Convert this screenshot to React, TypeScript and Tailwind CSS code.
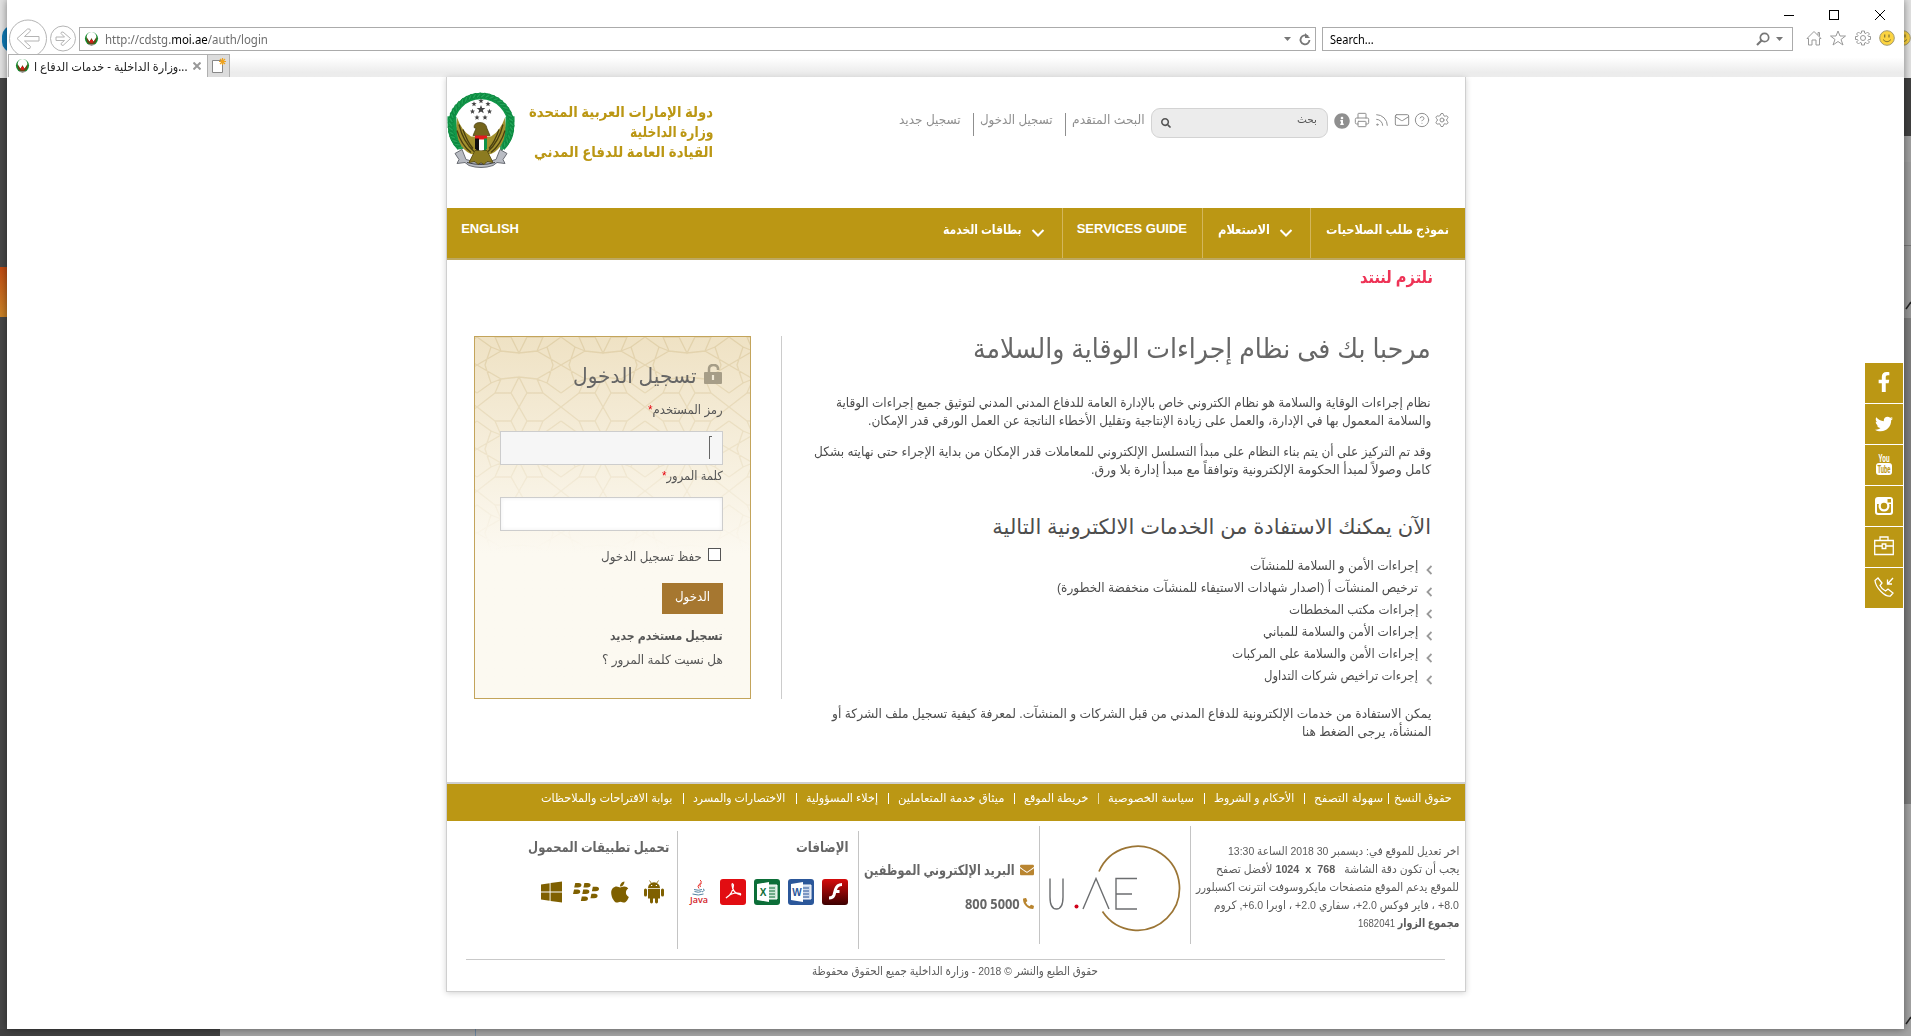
import React, { useLayoutEffect, useRef, useState } from "react";
import {
  FaTwitter, FaFacebookF, FaInfoCircle, FaSearch, FaWindows, FaApple, FaBlackberry, FaEnvelope, FaPhoneAlt,
} from "react-icons/fa";
import { Settings, CircleHelp, Mail, Rss, Printer } from "lucide-react";

/** Single line of text stretched or condensed to the width of its box. */
function Fit({ className = "", ltr = false, children }: { className?: string; ltr?: boolean; children: React.ReactNode }) {
  const box = useRef<HTMLSpanElement>(null);
  const text = useRef<HTMLSpanElement>(null);
  const [scale, setScale] = useState(1);
  useLayoutEffect(() => {
    if (box.current && text.current) setScale(box.current.clientWidth / text.current.offsetWidth);
  }, []);
  return (
    <span ref={box} dir={ltr ? "ltr" : "rtl"} className={"flex shrink-0 items-center justify-start " + className}>
      <span
        ref={text}
        className={"block shrink-0 whitespace-nowrap " + (ltr ? "origin-left" : "origin-right")}
        style={{ transform: `scaleX(${scale})` }}
      >
        {children}
      </span>
    </span>
  );
}

function Favicon() {
  return (
    <svg viewBox="0 0 16 16" className="h-4 w-[15px] shrink-0">
      <ellipse cx="8" cy="7.5" rx="7" ry="7" fill="#128a2c" />
      <ellipse cx="8" cy="5.8" rx="5.2" ry="5.2" fill="#fff" />
      <path d="M2.500 5.500 6 11l2-4 2 4 3.500-5.500-1 6L8 15l-4.500-3.500z" fill="#6d4013" />
      <path d="M6.500 9h3v3h-3z" fill="#e01b1b" />
      <path d="M3.500 13.500h9L8 15.500z" fill="#999" />
    </svg>
  );
}

function Emblem() {
  const leaves = Array.from({ length: 34 }, (_, i) => {
    const deg = 132 + i * 8.35;
    const a = (deg * Math.PI) / 180;
    return [34 + 30.5 * Math.cos(a), 33 + 30 * Math.sin(a), deg] as const;
  });
  const stars = [[34, 8.5, 2.8], [27, 11.5, 2.8], [41, 11.5, 2.8], [25.5, 19, 2.8], [34, 17, 4.6], [42.5, 19, 2.8], [30, 25, 2.8], [38, 25, 2.8]];
  return (
    <svg viewBox="0 0 68 76" className="h-[77px] w-[68px] shrink-0">
      <circle cx="34" cy="33" r="29" fill="#fff" />
      <path d="M13 55A30 30 0 1 1 55 55" fill="none" stroke="#12984a" strokeWidth="6.5" />
      <path d="M5 24Q4 44 14 54M63 24q1 20-9 30" fill="none" stroke="#12984a" strokeWidth="9" />
      {leaves.map(([x, y, r], i) => (
        <ellipse key={i} cx={x} cy={y} rx="3.4" ry="1.2" fill="#22a658" stroke="#087a38" strokeWidth=".6" transform={`rotate(${r + 45} ${x} ${y})`} />
      ))}
      <path d="M8 61 15 57l4 10 15 4 15-4 4-10 7 4-4 6 2 4-8-1-4 3q-12 4-24 0l-4-3-8 1 2-4z" fill="#b9bcc3" stroke="#6a6d74" strokeWidth="1" />
      <path d="M20 70q14 4 28 0" stroke="#3f4249" fill="none" />
      <path d="M10 25Q8 44 14 53q7 10 15 9l10 0q8 1 15-9 6-9 4-28-5 14-14 19l-4 0h-12l-4 0Q15 39 10 25z" fill="#a3912e" />
      <path d="M12 32q4 17 15 27M10 38q4 14 14 22M16 37q4 12 10 19M56 32q-4 17-15 27M58 38q-4 14-14 22M52 37q-4 12-10 19" stroke="#4a4010" fill="none" strokeWidth="1.3" />
      <path d="M28 58 22 70l6-1 3 3 3-2 3 2 3-3 6 1-6-12z" fill="#8c7b20" stroke="#50450f" strokeWidth=".8" />
      <path d="M27 35q0-5 6-5 6 0 7 6l3 7H26l3-7z" fill="#75651c" stroke="#453b0d" strokeWidth=".7" />
      <path d="M28 45h12v11q-6 4-12 0z" fill="#fff" />
      <path d="M28 43h12v4H28z" fill="#e21b1b" />
      <path d="M28 46h4v12q-3 0-4-2z" fill="#111" />
      <path d="M37 46h3v10q-1 2-3 2z" fill="#0f9247" />
      {stars.map(([x, y, r], i) => (
        <polygon
          key={i}
          fill="#444"
          points={Array.from({ length: 10 }, (_, k) => {
            const q = k % 2 ? r * 0.42 : r;
            const a = (-90 + k * 36) * (Math.PI / 180);
            return `${x + q * Math.cos(a)},${y + q * Math.sin(a)}`;
          }).join(" ")}
        />
      ))}
    </svg>
  );
}

function Smile() {
  return (
    <svg viewBox="0 0 16 16" className="size-4 shrink-0">
      <circle cx="8" cy="8" r="7.300" fill="#fcd440" stroke="#a39a72" />
      <path d="M5.700 4.500v3M10 4.500v3" stroke="#8a7a35" strokeWidth="1.300" />
      <path d="M4 9.500q4 4.500 8 0" stroke="#8a7a35" fill="none" />
    </svg>
  );
}

function BrowserChrome() {
  return (
    <div dir="ltr" className="flex h-[77px] flex-col font-['Noto_Sans','DejaVu_Sans',sans-serif]">
      <div className="flex h-[27px] items-center justify-end pt-[3px] pr-[18px]">
        <svg viewBox="0 0 102 12" className="h-3 w-[102px]" fill="none" stroke="#000" shapeRendering="crispEdges">
          <path d="M0 6.500h10M45.500 1.500h9v9h-9z" />
          <path d="m91 1 10 10m0-10L91 11" shapeRendering="auto" />
        </svg>
      </div>
      <div className="flex h-[27px] items-start">
        <div className="flex h-[27px] w-[72px] shrink-0 items-start overflow-visible">
          <svg viewBox="0 0 72 35" className="-mt-2 h-[35px] w-[72px]" fill="#fff" stroke="#b4b4b4">
            <circle cx="21" cy="19.500" r="18.500" />
            <path d="M32 17.500H17.500l6-5.500q0-3-3-2L10 19.500l10.500 10q3 1 3-2l-6-5.500H32z" />
            <circle cx="56" cy="19.500" r="12.500" />
            <path d="M49 18h8.500L54 14.500q0-2 2-1.500l7.500 6.500L56 26.500q-2 0-2-2l3.500-3H49z" />
          </svg>
        </div>
        <div className="flex h-6 w-[1237px] shrink-0 items-center border border-[#ababab] bg-white pl-1">
          <Favicon />
          <Fit ltr className="ml-[6px] w-[163px] pt-[2px] text-[12.500px] text-[#6d6d6d]">
            http://cdstg.<span className="text-black">moi.ae</span>/auth/login
          </Fit>
          <svg viewBox="0 0 28 14" className="mr-1 ml-auto h-3.5 w-7" fill="none" stroke="#777">
            <path d="M1 5h7L4.500 9z" fill="#777" stroke="none" />
            <path d="M25 4.500A4.500 4.500 0 1 0 26.500 8" strokeWidth="1.800" />
            <path d="M22 1v5h5z" fill="#777" stroke="none" />
          </svg>
        </div>
        <div className="ml-1.5 flex h-6 w-[471px] shrink-0 items-center border border-[#ababab] bg-white pr-2 pl-[7px]">
          <Fit ltr className="w-[44px] pt-[2px] text-[12px] text-black">Search...</Fit>
          <svg viewBox="0 0 28 14" className="ml-auto h-3.5 w-7" fill="none" stroke="#777">
            <circle cx="8.500" cy="5.500" r="4.200" strokeWidth="1.700" />
            <path d="m5.500 8.500-4.500 4.500" strokeWidth="2.200" />
            <path d="M20 5h7l-3.500 4z" fill="#777" stroke="none" />
          </svg>
        </div>
        <div className="mt-[3px] ml-[13px] flex gap-[8px]">
          <svg viewBox="0 0 16 16" className="size-4" fill="none" stroke="#999">
            <path d="M1 8.500 8 1.500l7 7H13.500V15H10v-5H6v5H2.500V8.500zM12 5V2.500h1.500v4" />
          </svg>
          <svg viewBox="0 0 16 16" className="size-4" fill="none" stroke="#999">
            <path d="m8 1 2 5h5.500l-4.500 3.500 2 5.500-5-3.500L3 15l2-5.500L.5 6H6z" />
          </svg>
          <svg viewBox="0 0 16 16" className="ml-px size-4" fill="none" stroke="#999">
            <path d="M6.500 1h3v2l1.500.5L12.500 2l2 2L13 5.500l.5 1h2v3h-2l-.5 1 1.500 1.500-2 2-1.500-1.500-1.500.5v2h-3v-2L5 12.500 3.500 14l-2-2L3 10.500l-.5-1h-2v-3h2l.5-1L1.500 4l2-2L5 3.500 6.500 3z" />
            <circle cx="8" cy="8" r="2.500" />
          </svg>
          <Smile />
        </div>
      </div>
      <div className="flex h-[23px] items-end bg-linear-to-b from-white from-15% to-[#ececec] to-80%">
        <div className="ml-[1px] flex h-[23px] w-[200px] shrink-0 items-center border border-b-0 border-[#b0b0b0] bg-white pl-[6px]">
          <Favicon />
          <Fit ltr className="ml-[4px] w-[153px] pt-[2px] text-[12px] text-[#222]">
            <bdi dir="rtl">وزارة الداخلية - خدمات الدفاع ا</bdi>...
          </Fit>
          <svg viewBox="0 0 8 8" className="ml-[6px] size-2" stroke="#999" strokeWidth="2">
            <path d="m0.500.5 7 7m0-7-7 7" />
          </svg>
        </div>
        <div className="flex h-[23px] w-[22px] shrink-0 items-center justify-center border border-b-0 border-l-0 border-[#b0b0b0] bg-[#dcdcdc]">
          <svg viewBox="0 0 16 16" className="size-4">
            <path d="M1.500 2.500h10v12h-10z" fill="#fff" stroke="#888" />
            <path d="M11.500 0v7M8 3.500h7M9 1l5 5m0-5L9 6" stroke="#eda21f" strokeWidth="1.200" />
          </svg>
        </div>
      </div>
    </div>
  );
}

function TopBar() {
  return (
    <header className="flex h-[131px] items-start">
      <div className="flex w-full items-start pr-[15px] pt-[31px] text-[12.500px] text-[#8f8f8f]">
        <div className="mt-[4px] flex gap-[4px]">
          <Settings className="size-4" strokeWidth={1.5} />
          <CircleHelp className="size-4" strokeWidth={1.5} />
          <Mail className="size-4" strokeWidth={1.5} />
          <Rss className="size-4" strokeWidth={1.5} />
          <Printer className="size-4" strokeWidth={1.5} />
          <FaInfoCircle className="mt-px size-4" />
        </div>
        <div className="mr-[6px] flex h-[30px] w-[177px] items-start justify-between rounded-[9px] border border-[#d3d3d3] bg-[#ececec] pr-[10px] pl-[9px] text-[#555]">
          <Fit className="mt-[2px] h-4 w-[20px] text-[11px]">بحث</Fit>
          <FaSearch className="mt-[9px] size-[10px]" />
        </div>
        <Fit className="mt-[4px] mr-[6px] h-4 w-[73px]">البحث المتقدم</Fit>
        <i className="mt-[5px] mr-[6px] h-[23px] w-px bg-[#8f8f8f]" />
        <Fit className="mt-[4px] mr-[12px] h-4 w-[73px]">تسجيل الدخول</Fit>
        <i className="mt-[5px] mr-[6px] h-[23px] w-px bg-[#8f8f8f]" />
        <Fit className="mt-[4px] mr-[12px] h-4 w-[62px]">تسجيل جديد</Fit>
        <div className="-mt-[6px] mr-auto ml-[14px] flex flex-col text-[15px] leading-5 font-bold text-[#bb9714]">
          <Fit className="h-5 w-[184px]">دولة الإمارات العربية المتحدة</Fit>
          <Fit className="h-5 w-[84px]">وزارة الداخلية</Fit>
          <Fit className="h-5 w-[179px]">القيادة العامة للدفاع المدني</Fit>
        </div>
        <div className="-mt-[16px]">
          <Emblem />
        </div>
      </div>
    </header>
  );
}

function Chevron() {
  return (
    <svg viewBox="0 0 14 10" className="mt-[20px] h-[10px] w-[14px]" fill="none" stroke="#fff" strokeWidth="2">
      <path d="m1.500 2 5.500 5.500L12.500 2" />
    </svg>
  );
}

function Nav() {
  return (
    <nav className="flex h-[52px] items-stretch border-b-2 border-[#bda860] bg-[#bb9714] text-[13px] font-bold text-white">
      <div className="flex w-[155px] items-start border-l border-[#d3b65c] pr-[16px]">
        <Fit className="h-[43px] w-[123px]">نموذج طلب الصلاحيات</Fit>
      </div>
      <div className="flex w-[108px] items-start border-l border-[#d3b65c] pr-[17px]">
        <Chevron />
        <Fit className="mr-[9px] h-[43px] w-[52px]">الاستعلام</Fit>
      </div>
      <div className="flex w-[140px] items-start border-l border-[#d3b65c] pr-[15px]">
        <Fit className="h-[42px] w-[110px]">SERVICES GUIDE</Fit>
      </div>
      <div className="flex items-start pr-[17px]">
        <Chevron />
        <Fit className="mr-[9px] h-[43px] w-[79px]">بطاقات الخدمة</Fit>
      </div>
      <div className="mr-auto flex pl-[14px]">
        <Fit className="h-[42px] w-[58px]">ENGLISH</Fit>
      </div>
    </nav>
  );
}

function LoginPanel() {
  return (
    <section className="flex h-[363px] w-[277px] shrink-0 flex-col border border-[#c3a45b] bg-linear-to-b from-[#efe2c4] to-[#fcf9f1] to-60% text-[12.500px] text-[#555]">
      <svg className="h-[215px] w-[275px] shrink-0" fill="none" stroke="#d3bf90" strokeOpacity=".5" strokeWidth="1.3">
        <defs>
          <linearGradient id="fade" x1="0" y1="0" x2="0" y2="1">
            <stop offset="0" stopColor="#fff" />
            <stop offset="1" stopColor="#000" />
          </linearGradient>
          <mask id="fadeMask">
            <path d="M0 0h275v215H0z" fill="url(#fade)" stroke="none" />
          </mask>
          <pattern id="lattice" width="84" height="84" patternUnits="userSpaceOnUse" x="2" y="-14">
            <path d="M42 0 50 14 66 14 60 28 84 42 60 56 66 70 50 70 42 84 34 70 18 70 24 56 0 42 24 28 18 14 34 14zM0 0 18 14M84 0 66 14M0 84 18 70M84 84 66 70M0 14 14 24 8 42 14 60 0 70M84 14 70 24 76 42 70 60 84 70M34 14 42 30 50 14M34 70 42 54 50 70M24 28 42 30 60 28M24 56 42 54 60 56M14 24 24 28M70 24 60 28M14 60 24 56M70 60 60 56" />
          </pattern>
        </defs>
        <path d="M0 0h275v215H0z" fill="url(#lattice)" stroke="none" mask="url(#fadeMask)" />
      </svg>
      <div className="-mt-[215px] flex flex-col pr-[27px]">
        <div className="mt-[24px] flex h-[30px] items-center text-[21px] text-[#666]">
          <svg viewBox="0 0 18 20" className="mr-[1px] -mt-[3px] h-5 w-[18px]" fill="none" stroke="#a69d87">
            <path d="M1 9h16v10H1z" fill="#a69d87" strokeLinejoin="round" strokeWidth="2" />
            <path d="M5 8V5q0-4 4.500-4T14 5v1" strokeWidth="2.500" />
            <path d="M9 11v5" stroke="#f0e8d4" strokeWidth="2.200" />
          </svg>
          <Fit className="mr-[7px] w-[124px]">تسجيل الدخول</Fit>
        </div>
        <Fit className="mt-[10px] h-5 w-[75px]">رمز المستخدم<span className="text-red-600">*</span></Fit>
        <div className="mt-[10px] flex h-[34px] w-[223px] border border-[#cdcdcd] bg-[#f6f6f6] pt-1 pr-[10px]">
          <i className="h-[23px] w-[3px] border-t border-l border-[#666]" />
        </div>
        <Fit className="mt-[2px] h-5 w-[61px]">كلمة المرور<span className="text-red-600">*</span></Fit>
        <div className="mt-[10px] h-[34px] w-[223px] border border-[#cdcdcd] bg-white shadow-[inset_0_0_4px_#eee]" />
        <div className="mt-[16px] flex h-5 items-center">
          <i className="mr-[2px] -mt-[4px] size-[13px] border border-[#555] bg-white" />
          <Fit className="mr-[6px] w-[101px] pt-px">حفظ تسجيل الدخول</Fit>
        </div>
        <div className="mt-[16px] flex h-[31px] w-[61px] justify-center bg-[#a67730] text-white">
          <Fit className="h-[29px] w-[35px]">الدخول</Fit>
        </div>
        <Fit className="mt-[13px] h-5 w-[113px] font-bold">تسجيل مستخدم جديد</Fit>
        <Fit className="mt-[4px] h-5 w-[121px]">هل نسيت كلمة المرور ؟</Fit>
      </div>
    </section>
  );
}

const services: [string, string][] = [
  ["إجراءات الأمن و السلامة للمنشآت", "w-[168px]"],
  ["ترخيص المنشآت أ (اصدار شهادات الاستيفاء للمنشآت منخفضة الخطورة)", "w-[361px]"],
  ["إجراءات مكتب المخططات", "w-[129px]"],
  ["إجراءات الأمن والسلامة للمباني", "w-[155px]"],
  ["إجراءات الأمن والسلامة على المركبات", "w-[186px]"],
  ["إجرءات تراخيص شركات التداول", "w-[154px]"],
];

function Body() {
  return (
    <main className="flex h-[523px] flex-col">
      <Fit className="mt-[6px] mr-[32px] h-6 w-[73px] text-[17px] font-bold text-[#ee3356]">نلتزم لننتد</Fit>
      <div className="mt-[46px] flex justify-between pr-[34px] pl-[27px]">
        <article className="flex h-[363px] w-[650px] flex-col border-l border-[#ccc] text-[13px] text-[#4d4d4d]">
          <Fit className="-mt-[3px] h-8 w-[458px] text-[27px] text-[#666]">مرحبا بك فى نظام إجراءات الوقاية والسلامة</Fit>
          <Fit className="mt-[29px] h-[18px] w-[595px]">نظام إجراءات الوقاية والسلامة هو نظام الكتروني خاص بالإدارة العامة للدفاع المدني المدني لتوثيق جميع إجراءات الوقاية</Fit>
          <Fit className="h-[18px] w-[563px]">والسلامة المعمول بها في الإدارة، والعمل على زيادة الإنتاجية وتقليل الأخطاء الناتجة عن العمل الورقي قدر الإمكان.</Fit>
          <Fit className="mt-[13px] h-[18px] w-[617px]">وقد تم التركيز على أن يتم بناء النظام على مبدأ التسلسل الإلكتروني للمعاملات قدر الإمكان من بداية الإجراء حتى نهايته بشكل</Fit>
          <Fit className="h-[18px] w-[340px]">كامل وصولاً لمبدأ الحكومة الإلكترونية وتوافقاً مع مبدأ إدارة بلا ورق.</Fit>
          <Fit className="mt-[33px] h-[30px] w-[439px] text-[21px]">الآن يمكنك الاستفادة من الخدمات الالكترونية التالية</Fit>
          <ul className="mt-[13px]">
            {services.map(([label, width]) => (
              <li key={label} className="flex h-[22px] items-center">
                <svg viewBox="0 0 6 10" className="-mr-px mt-[9px] h-[10px] w-[6px]" fill="none" stroke="#9a9a9a" strokeWidth="1.800">
                  <path d="M5.500 1 1.500 5l4 4" />
                </svg>
                <Fit className={"mr-[8px] " + width}>{label}</Fit>
              </li>
            ))}
          </ul>
          <Fit className="mt-[18px] h-[18px] w-[599px]">يمكن الاستفادة من خدمات الإلكترونية للدفاع المدني من قبل الشركات و المنشآت. لمعرفة كيفية تسجيل ملف الشركة أو</Fit>
          <Fit className="h-[18px] w-[129px]">المنشأة، يرجى الضغط هنا</Fit>
        </article>
        <LoginPanel />
      </div>
    </main>
  );
}

const links: [string, string, string][] = [
  ["سهولة التصفح", "w-[69px] mr-[5px]", "mr-[5px] bg-white"],
  ["الأحكام و الشروط", "w-[80px] mr-[10px]", "mr-[9px] bg-white"],
  ["سياسة الخصوصية", "w-[86px] mr-[10px]", "mr-[9px] bg-white"],
  ["خريطة الموقع", "w-[64px] mr-[10px]", "mr-[9px] bg-[#eadcab]"],
  ["ميثاق خدمة المتعاملين", "w-[106px] mr-[10px]", "mr-[9px] bg-white"],
  ["إخلاء المسؤولية", "w-[72px] mr-[10px]", "mr-[9px] bg-white"],
  ["الاختصارات والمسرد", "w-[92px] mr-[11px]", "mr-[9px] bg-white"],
  ["بوابة الاقتراحات والملاحظات", "w-[131px] mr-[11px]", "mr-[9px] bg-white"],
];

function FooterLinks() {
  return (
    <div className="flex h-[39px] shrink-0 items-start border-t-2 border-[#cfcfcf] bg-[#bb9714] pt-[6px] pr-[13px] text-[11.500px] text-white">
      <Fit className="h-4 w-[58px]">حقوق النسخ</Fit>
      {links.map(([label, box, bar]) => (
        <React.Fragment key={label}>
          <i className={"mt-[3px] h-[11px] w-px shrink-0 " + bar} />
          <Fit className={"h-4 " + box}>{label}</Fit>
        </React.Fragment>
      ))}
    </div>
  );
}

function UaeLogo() {
  return (
    <svg viewBox="0 0 134 90" className="h-[90px] w-[134px]" fill="none" stroke="#6c6e70" strokeWidth="1.400">
      <path d="M51 27.500A42 42 0 1 1 54.500 67.500" stroke="#9b7535" strokeWidth="1.700" />
      <path d="M2 34.500v18.500q0 12 6.500 12t6.500-12V34.500" />
      <circle cx="28.500" cy="62.500" r="2" fill="#d0021b" stroke="none" />
      <path d="M35 65 48 34.500 61 65M89 34.500H68v30.500h21M68 50h16" />
    </svg>
  );
}

function OfficeTile({ letter, color, light }: { letter: string; color: string; light: string }) {
  return (
    <svg viewBox="0 0 26 26" className="size-[26px]">
      <rect width="26" height="26" rx="3" fill={color} />
      <path d="M12 6h11v14H12z" fill={light} stroke="#fff" />
      <path d="M15 9h6M15 12h6M15 15h6M15 18h6" stroke={color} />
      <path d="M3 5 15 3v20L3 21z" fill="#fff" />
      <text x="9" y="17" fill={color} textAnchor="middle" className="font-['Liberation_Sans',sans-serif] text-[10px] font-bold">{letter}</text>
    </svg>
  );
}

function Android() {
  return (
    <svg viewBox="0 0 20 24" className="h-6 w-5" fill="currentColor">
      <path d="M4 8a6 5.800 0 0 1 12 0zM4 8.800h12v9.700H4z" />
      <rect x="0" y="8.500" width="3" height="8" rx="1.500" />
      <rect x="17" y="8.500" width="3" height="8" rx="1.500" />
      <rect x="6" y="16" width="3" height="7.500" rx="1.400" />
      <rect x="11" y="16" width="3" height="7.500" rx="1.400" />
      <path d="m5.500.5 2 3m7-3-2 3" stroke="currentColor" strokeWidth=".8" />
      <path d="M7 5h1.200v1H7zm4.800 0H13v1h-1.200z" fill="#fff" />
    </svg>
  );
}

function Footer() {
  return (
    <footer className="flex h-[170px] flex-col text-[#5b5b5b]">
      <div className="flex h-[138px] shrink-0 items-start">
        <div className="mt-[5px] flex h-[118px] w-[275px] flex-col border-l border-[#c4c4c4] pt-[16px] pr-[6px] text-[11.500px]">
          <Fit className="h-[18px] w-[231px]">اخر تعديل للموقع في: ديسمبر 30 2018 الساعة 13:30</Fit>
          <Fit className="h-[18px] w-[243px]">يجب أن تكون دقة الشاشة &nbsp; <bdo dir="ltr" className="font-bold">1024 &nbsp;x&nbsp; 768</bdo> لأفضل تصفح</Fit>
          <Fit className="h-[18px] w-[263px]">للموقع يدعم الموقع متصفحات مايكروسوفت انترنت اكسبلورر</Fit>
          <Fit className="h-[18px] w-[245px]">8.0+ ، فاير فوكس 2.0+، سفاري 2.0+ ، اوبرا 6.0+, كروم</Fit>
          <Fit className="h-[18px] w-[102px]"><b>مجموع الزوار</b> 1682041</Fit>
        </div>
        <div className="mt-[5px] flex h-[118px] w-[151px] items-start border-l border-[#c4c4c4] pt-[18px] pr-[8px]">
          <UaeLogo />
        </div>
        <div className="mt-[10px] flex h-[118px] w-[181px] flex-col border-l border-[#c4c4c4] pt-[29px] pr-[5px] text-[14px] font-bold text-[#666]">
          <div className="flex h-5 items-center">
            <FaEnvelope className="size-[14px] text-[#b98530]" />
            <Fit className="mr-[5px] w-[151px]">البريد الإلكتروني الموظفين</Fit>
          </div>
          <div className="mt-[13px] flex h-5 items-center">
            <FaPhoneAlt className="size-[11px] text-[#b98530]" />
            <Fit ltr className="mr-[3px] w-[55px] font-['Open_Sans',sans-serif]">800 5000</Fit>
          </div>
        </div>
        <div className="mt-[10px] flex h-[118px] w-[181px] flex-col border-l border-[#c4c4c4] pt-[6px] text-[14px] font-bold text-[#666]">
          <Fit className="mr-[9px] h-5 w-[53px]">الإضافات</Fit>
          <div className="mt-[22px] mr-[10px] flex gap-[8px]">
            <svg viewBox="0 0 26 26" className="size-[26px]">
              <defs>
                <linearGradient id="flash" x1="0" y1="0" x2="0" y2="1"><stop stopColor="#d60b0b" /><stop offset="1" stopColor="#3c0000" /></linearGradient>
              </defs>
              <rect width="26" height="26" rx="3" fill="url(#flash)" />
              <path d="M20 5.500q-5 0-6.500 5L12 16q-1 3-5 3M12.500 12.500h5" stroke="#fff" strokeWidth="3" fill="none" />
            </svg>
            <OfficeTile letter="W" color="#2b579a" light="#cdd9ec" />
            <OfficeTile letter="X" color="#0c6e38" light="#cfe7d8" />
            <svg viewBox="0 0 26 26" className="size-[26px]">
              <rect width="26" height="26" rx="3" fill="#e20d12" />
              <path d="M6 19q7-4 7.500-13-1.500-3-1.500 0 .5 8 8.500 10 1-2-3-2-7 0-11.500 5z" fill="none" stroke="#fff" strokeWidth="1.200" />
            </svg>
            <svg viewBox="0 0 26 26" className="size-[26px]">
              <path d="M14 1q3 2-1 4.500-2 1.500 0 4M15.500 4q-3 2-1 4" stroke="#e8332e" fill="none" />
              <path d="M8 10.500q5 1.500 8 0M8.500 12.500q4 1.500 7 0M6.500 15q6 2 11 0M17 10q3 1-1 3" stroke="#5382a1" fill="none" />
              <text x="13" y="23.500" textAnchor="middle" fill="#d3222a" className="font-['Open_Sans',sans-serif] text-[9px] font-semibold">Java</text>
            </svg>
          </div>
        </div>
        <div className="mt-[10px] flex flex-col pt-[6px] text-[14px] font-bold text-[#666]">
          <Fit className="mr-[8px] h-5 w-[141px]">تحميل تطبيقات المحمول</Fit>
          <div className="mt-[22px] mr-[13px] flex items-center text-[#7f6000]">
            <Android />
            <FaApple className="mr-[14px] h-[24px] w-[20px]" />
            <FaBlackberry className="mr-[11px] size-[26px]" />
            <FaWindows className="mr-[10px] h-[24px] w-[23px]" />
          </div>
        </div>
      </div>
      <div className="mr-[20px] ml-[19px] flex h-[31px] items-start border-t border-[#c9c9c9] pt-[2px] pr-[347px] text-[11.500px]">
        <Fit className="h-[18px] w-[286px]">حقوق الطبع والنشر © 2018 - وزارة الداخلية جميع الحقوق محفوظة</Fit>
      </div>
    </footer>
  );
}

function SocialRail() {
  const tile = "flex h-10 w-[38px] items-center justify-center bg-[#bb9714] text-white";
  return (
    <aside className="mt-[286px] flex w-[38px] flex-col gap-px">
      <div className={tile}><FaFacebookF className="-mt-[2px] size-[20px]" /></div>
      <div className={tile}><FaTwitter className="size-[18px]" /></div>
      <div className={tile}>
        <svg viewBox="0 0 18 22" className="-mt-[2px] h-[22px] w-[18px] overflow-visible">
          <rect x="1" y="10" width="16" height="12" rx="3" fill="#fff" />
          <text x="9" y="9" textAnchor="middle" fill="#fff" textLength="11" lengthAdjust="spacingAndGlyphs" className="font-['Roboto',sans-serif] text-[10px] font-bold">You</text>
          <text x="9" y="19.500" textAnchor="middle" fill="#bb9714" textLength="13" lengthAdjust="spacingAndGlyphs" className="font-['Roboto',sans-serif] text-[10px] font-bold">Tube</text>
        </svg>
      </div>
      <div className={tile}>
        <svg viewBox="0 0 18 18" className="size-[18px]">
          <rect width="18" height="18" rx="3" fill="#fff" />
          <path d="M2 7h14v7.500q0 1.500-1.500 1.500h-11Q2 16 2 14.500z" fill="#bb9714" />
          <circle cx="9" cy="9" r="5.500" fill="#fff" />
          <circle cx="9" cy="9" r="3.200" fill="#bb9714" />
          <path d="M12.500 2H16v3.500h-3.500z" fill="#bb9714" />
        </svg>
      </div>
      <div className={tile}>
        <svg viewBox="0 0 20 20" className="-mt-[2px] size-5" fill="none" stroke="#fff" strokeWidth="1.300">
          <path d="M.7 4.500h18.600v14H.7zM6 4V1h8v3M.7 10h7.500m3.600 0h7.500M8.200 8h3.600v4.500H8.200z" />
        </svg>
      </div>
      <div className={tile}>
        <svg viewBox="0 0 20 20" className="-mt-[3px] size-5" fill="none" stroke="#fff" strokeWidth="1.300">
          <path d="M1 3.500 4 1l4 5-2 2.500q2 4 5.500 5.500l2.500-2 5 4-2.500 3q-4 1-9.500-4.500T1 3.500zM19 1l-5 5.500M13.500 2.500V7H18" />
        </svg>
      </div>
    </aside>
  );
}

function Slash() {
  return (
    <svg viewBox="0 0 7 12" className="h-3 w-[7px] shrink-0" stroke="#222" strokeWidth="1.500">
      <path d="m2 9 5-7" />
    </svg>
  );
}

export default function App() {
  return (
    <div dir="ltr" className="flex h-[1036px] w-[1911px] flex-col overflow-hidden bg-[#a8a8a8] font-['Liberation_Sans','DejaVu_Sans',sans-serif]">
      <div className="flex h-[1029px]">
        <div className="flex w-[7px] shrink-0 flex-col overflow-hidden bg-[#474747]">
          <div className="h-[78px] shrink-0 bg-[#e2e2e2] pt-[26px]">
            <i className="ml-[2px] block h-[26px] w-[20px] rounded-full bg-[#1079b4]" />
          </div>
          <i className="mt-[189px] h-[50px] shrink-0 bg-linear-to-b from-[#c04a12] to-[#c98328]" />
        </div>
        <div className="z-10 flex w-[1897px] shrink-0 flex-col bg-white shadow-[0_0_8px_rgba(0,0,0,.45)]">
          <BrowserChrome />
          <div className="flex">
            <div dir="rtl" className="ml-[439px] flex h-[915px] w-[1020px] shrink-0 flex-col border border-t-0 border-[#cfcfcf] bg-white shadow-[0_1px_6px_rgba(0,0,0,.18)]">
              <TopBar />
              <Nav />
              <Body />
              <FooterLinks />
              <Footer />
            </div>
            <div className="ml-auto flex pr-px">
              <SocialRail />
            </div>
          </div>
        </div>
        <div className="flex w-[7px] flex-col overflow-hidden bg-[#a3a3a3]">
          <div className="h-[78px] shrink-0 bg-[#e2e2e2] pt-[30px]">
            <div className="-ml-[9px] flex"><Smile /></div>
          </div>
          <i className="h-[58px] shrink-0 bg-[#404040]" />
          <i className="h-[26px] shrink-0 bg-[#a0a0a0]" />
          <i className="h-[84px] shrink-0 border-b border-[#777] bg-[#9c9c9c]" />
          <div className="flex h-[72px] shrink-0 items-end bg-[#979797] pb-[6px]"><Slash /></div>
          <i className="h-[486px] shrink-0 bg-[#7d7d7d]" />
          <div className="mt-auto flex pb-[2px]"><Slash /></div>
        </div>
      </div>
      <div className="flex h-[7px] bg-[#a3a3a3]">
        <i className="w-[220px] bg-[#414141]" />
        <i className="w-[256px] border-r border-[#6d87a0]" />
      </div>
    </div>
  );
}
